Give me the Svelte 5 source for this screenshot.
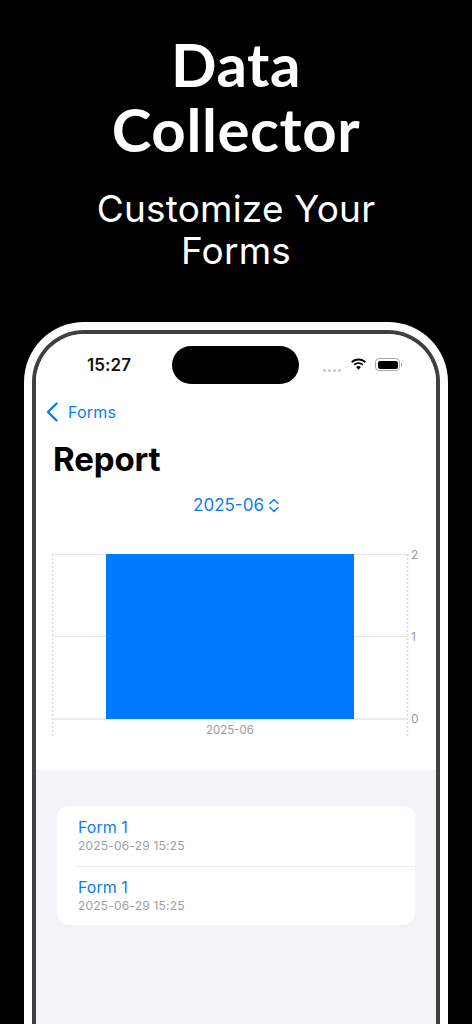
<script>
  const rows = [
    { title: 'Form 1', date: '2025-06-29 15:25' },
    { title: 'Form 1', date: '2025-06-29 15:25' }
  ];
</script>

<main class="page">
  <header class="hero">
    <h1>Data<br />Collector</h1>
    <p>Customize Your<br />Forms</p>
  </header>

  <section class="frame">
    <div class="bezel">
      <div class="screen">
        <div class="top">
          <div class="status">
            <span class="time">15:27</span>
            <span class="island"></span>
            <span class="dots"><i></i><i></i><i></i><i></i></span>
            <svg class="wifi" width="17" height="13" viewBox="0 0 17 13" aria-hidden="true">
              <path d="M8.5 2.4c2.4 0 4.6.9 6.2 2.5l1.2-1.3C14 1.6 11.4.5 8.5.5S3 1.6 1.1 3.6l1.2 1.3C3.9 3.3 6.1 2.4 8.5 2.4z" fill="#000"/>
              <path d="M8.5 6.1c1.4 0 2.7.5 3.7 1.5l1.2-1.3C12.1 5 10.4 4.2 8.5 4.2S4.900 5 3.600 6.300l1.200 1.300c1-1 2.300-1.500 3.700-1.500z" fill="#000"/>
              <path d="M8.500 8c-1 0-1.800.4-2.400 1l2.400 2.700L10.900 9c-.6-.6-1.400-1-2.400-1z" fill="#000"/>
            </svg>
            <span class="battery"><span class="cell"></span></span>
          </div>

          <nav class="nav">
            <svg width="12" height="20" viewBox="0 0 12 20" aria-hidden="true">
              <path d="M10.500 1.500 2 10l8.500 8.500" fill="none" stroke="#0a7cfa" stroke-width="2.400" stroke-linecap="round" stroke-linejoin="round"/>
            </svg>
            <span>Forms</span>
          </nav>

          <h2>Report</h2>

          <div class="picker">
            <span>2025-06</span>
            <svg width="10" height="15" viewBox="0 0 10 15" aria-hidden="true">
              <path d="M1 5.500 5 1.500l4 4M1 9.500l4 4 4-4" fill="none" stroke="#0a7cfa" stroke-width="1.500" stroke-linecap="round" stroke-linejoin="round"/>
            </svg>
          </div>

          <svg class="chart" width="399" height="202" viewBox="0 0 399 202" role="img" aria-label="Report chart">
            <g stroke="#e6e6e8" stroke-width="1">
              <line x1="16.500" x2="371" y1="18.500" y2="18.500"/>
              <line x1="16.500" x2="371" y1="100.500" y2="100.500"/>
              <line x1="16.500" x2="371" y1="183" y2="183" stroke-width="1.500"/>
            </g>
            <g stroke="#dcdcde" stroke-width="1.500" stroke-dasharray="2 2">
              <line x1="16.500" x2="16.500" y1="18" y2="200"/>
              <line x1="371.500" x2="371.500" y1="18" y2="200"/>
            </g>
            <rect x="70" y="18" width="248" height="165" fill="#007aff"/>
            <g class="tick">
              <text x="375" y="22.500">2</text>
              <text x="375" y="104.500">1</text>
              <text x="375" y="187">0</text>
              <text class="label" x="194" y="198" text-anchor="middle">2025-06</text>
            </g>
          </svg>
        </div>

        <div class="lower">
          <ul class="card">
            {#each rows as row}
              <li>
                <span class="title">{row.title}</span>
                <span class="date">{row.date}</span>
              </li>
            {/each}
          </ul>
        </div>
      </div>
    </div>
  </section>
</main>

<style>
  :global(body) {
    margin: 0;
    background: #000;
  }

  .page {
    width: 472px;
    height: 1024px;
    overflow: hidden;
    background: #000;
    font-family: Inter, "Liberation Sans", sans-serif;
  }

  .hero {
    height: 322px;
    box-sizing: border-box;
    padding-top: 32px;
    color: #fff;
    text-align: center;
  }

  h1 {
    margin: 0;
    font-family: Lato, sans-serif;
    font-size: 60px;
    font-weight: 700;
    line-height: 65px;
    letter-spacing: 0.6px;
  }

  .hero p {
    margin: 26px 0 0;
    font-family: Inter, sans-serif;
    font-size: 37px;
    line-height: 42px;
    letter-spacing: 0.2px;
  }

  .frame {
    width: 424px;
    height: 760px;
    margin-left: 24px;
    box-sizing: border-box;
    padding: 8px 8px 0;
    background: #fff;
    border-radius: 60px 60px 0 0;
  }

  .bezel {
    height: 100%;
    box-sizing: border-box;
    padding: 4px 4px 0;
    background: #3f3f3f;
    border-radius: 52px 52px 0 0;
  }

  .screen {
    height: 100%;
    overflow: hidden;
    background: #f2f2f7;
    border-radius: 48px 48px 0 0;
  }

  .top {
    height: 436px;
    background: #fff;
  }

  .status {
    position: relative;
    height: 62px;
    display: flex;
    align-items: center;
    padding-left: 51px;
  }

  .time {
    font-size: 17px;
    font-weight: 600;
    color: #111;
    letter-spacing: 0.1px;
  }

  .island {
    position: absolute;
    left: 136px;
    top: 12px;
    width: 127px;
    height: 38px;
    border-radius: 19px;
    background: #000;
  }

  .dots {
    position: absolute;
    left: 287px;
    top: 35px;
    display: flex;
    gap: 2px;
  }

  .dots i {
    width: 3px;
    height: 3px;
    border-radius: 50%;
    background: #c9c9c9;
  }

  .wifi {
    position: absolute;
    left: 314px;
    top: 24px;
  }

  .battery {
    position: absolute;
    left: 339px;
    top: 24px;
    width: 25px;
    height: 13px;
    box-sizing: border-box;
    padding: 1.500px;
    border: 1px solid #a8a8a8;
    border-radius: 4px;
  }

  .battery::after {
    content: "";
    position: absolute;
    right: -3px;
    top: 3.500px;
    width: 1.500px;
    height: 4px;
    border-radius: 0 1px 1px 0;
    background: #a8a8a8;
  }

  .cell {
    display: block;
    height: 100%;
    border-radius: 2px;
    background: #000;
  }

  .nav {
    display: flex;
    align-items: center;
    gap: 10px;
    height: 24px;
    padding-left: 10px;
    margin-top: 4px;
    font-size: 16px;
    letter-spacing: 0.2px;
    color: #0a7cfa;
  }

  h2 {
    margin: 16px 0 0 17px;
    font-size: 33px;
    font-weight: 700;
    line-height: 38px;
    color: #000;
    letter-spacing: -0.1px;
  }

  .picker {
    display: flex;
    justify-content: center;
    align-items: center;
    gap: 5px;
    margin-top: 17px;
    height: 20px;
    font-size: 17px;
    color: #0a7cfa;
  }

  .chart {
    display: block;
    margin-top: 21px;
  }

  .tick text {
    font-size: 12px;
    fill: #9a9a9c;
  }

  .tick .label {
    font-size: 11.500px;
  }

  .lower {
    padding: 36px 21px 0;
  }

  .card {
    list-style: none;
    margin: 0;
    padding: 0;
    background: #fff;
    border-radius: 12px;
  }

  .card li {
    display: flex;
    flex-direction: column;
    height: 59.500px;
    box-sizing: border-box;
    padding: 11px 0 0 21px;
  }

  .card li + li {
    position: relative;
  }

  .card li + li::before {
    content: "";
    position: absolute;
    left: 20px;
    right: 0;
    top: 0;
    height: 1px;
    background: #ececee;
  }

  .title {
    font-size: 16px;
    line-height: 20px;
    color: #0a7cfa;
  }

  .date {
    margin-top: 1px;
    font-size: 12px;
    line-height: 16px;
    color: #a0a0a2;
    letter-spacing: 0.2px;
  }
</style>
